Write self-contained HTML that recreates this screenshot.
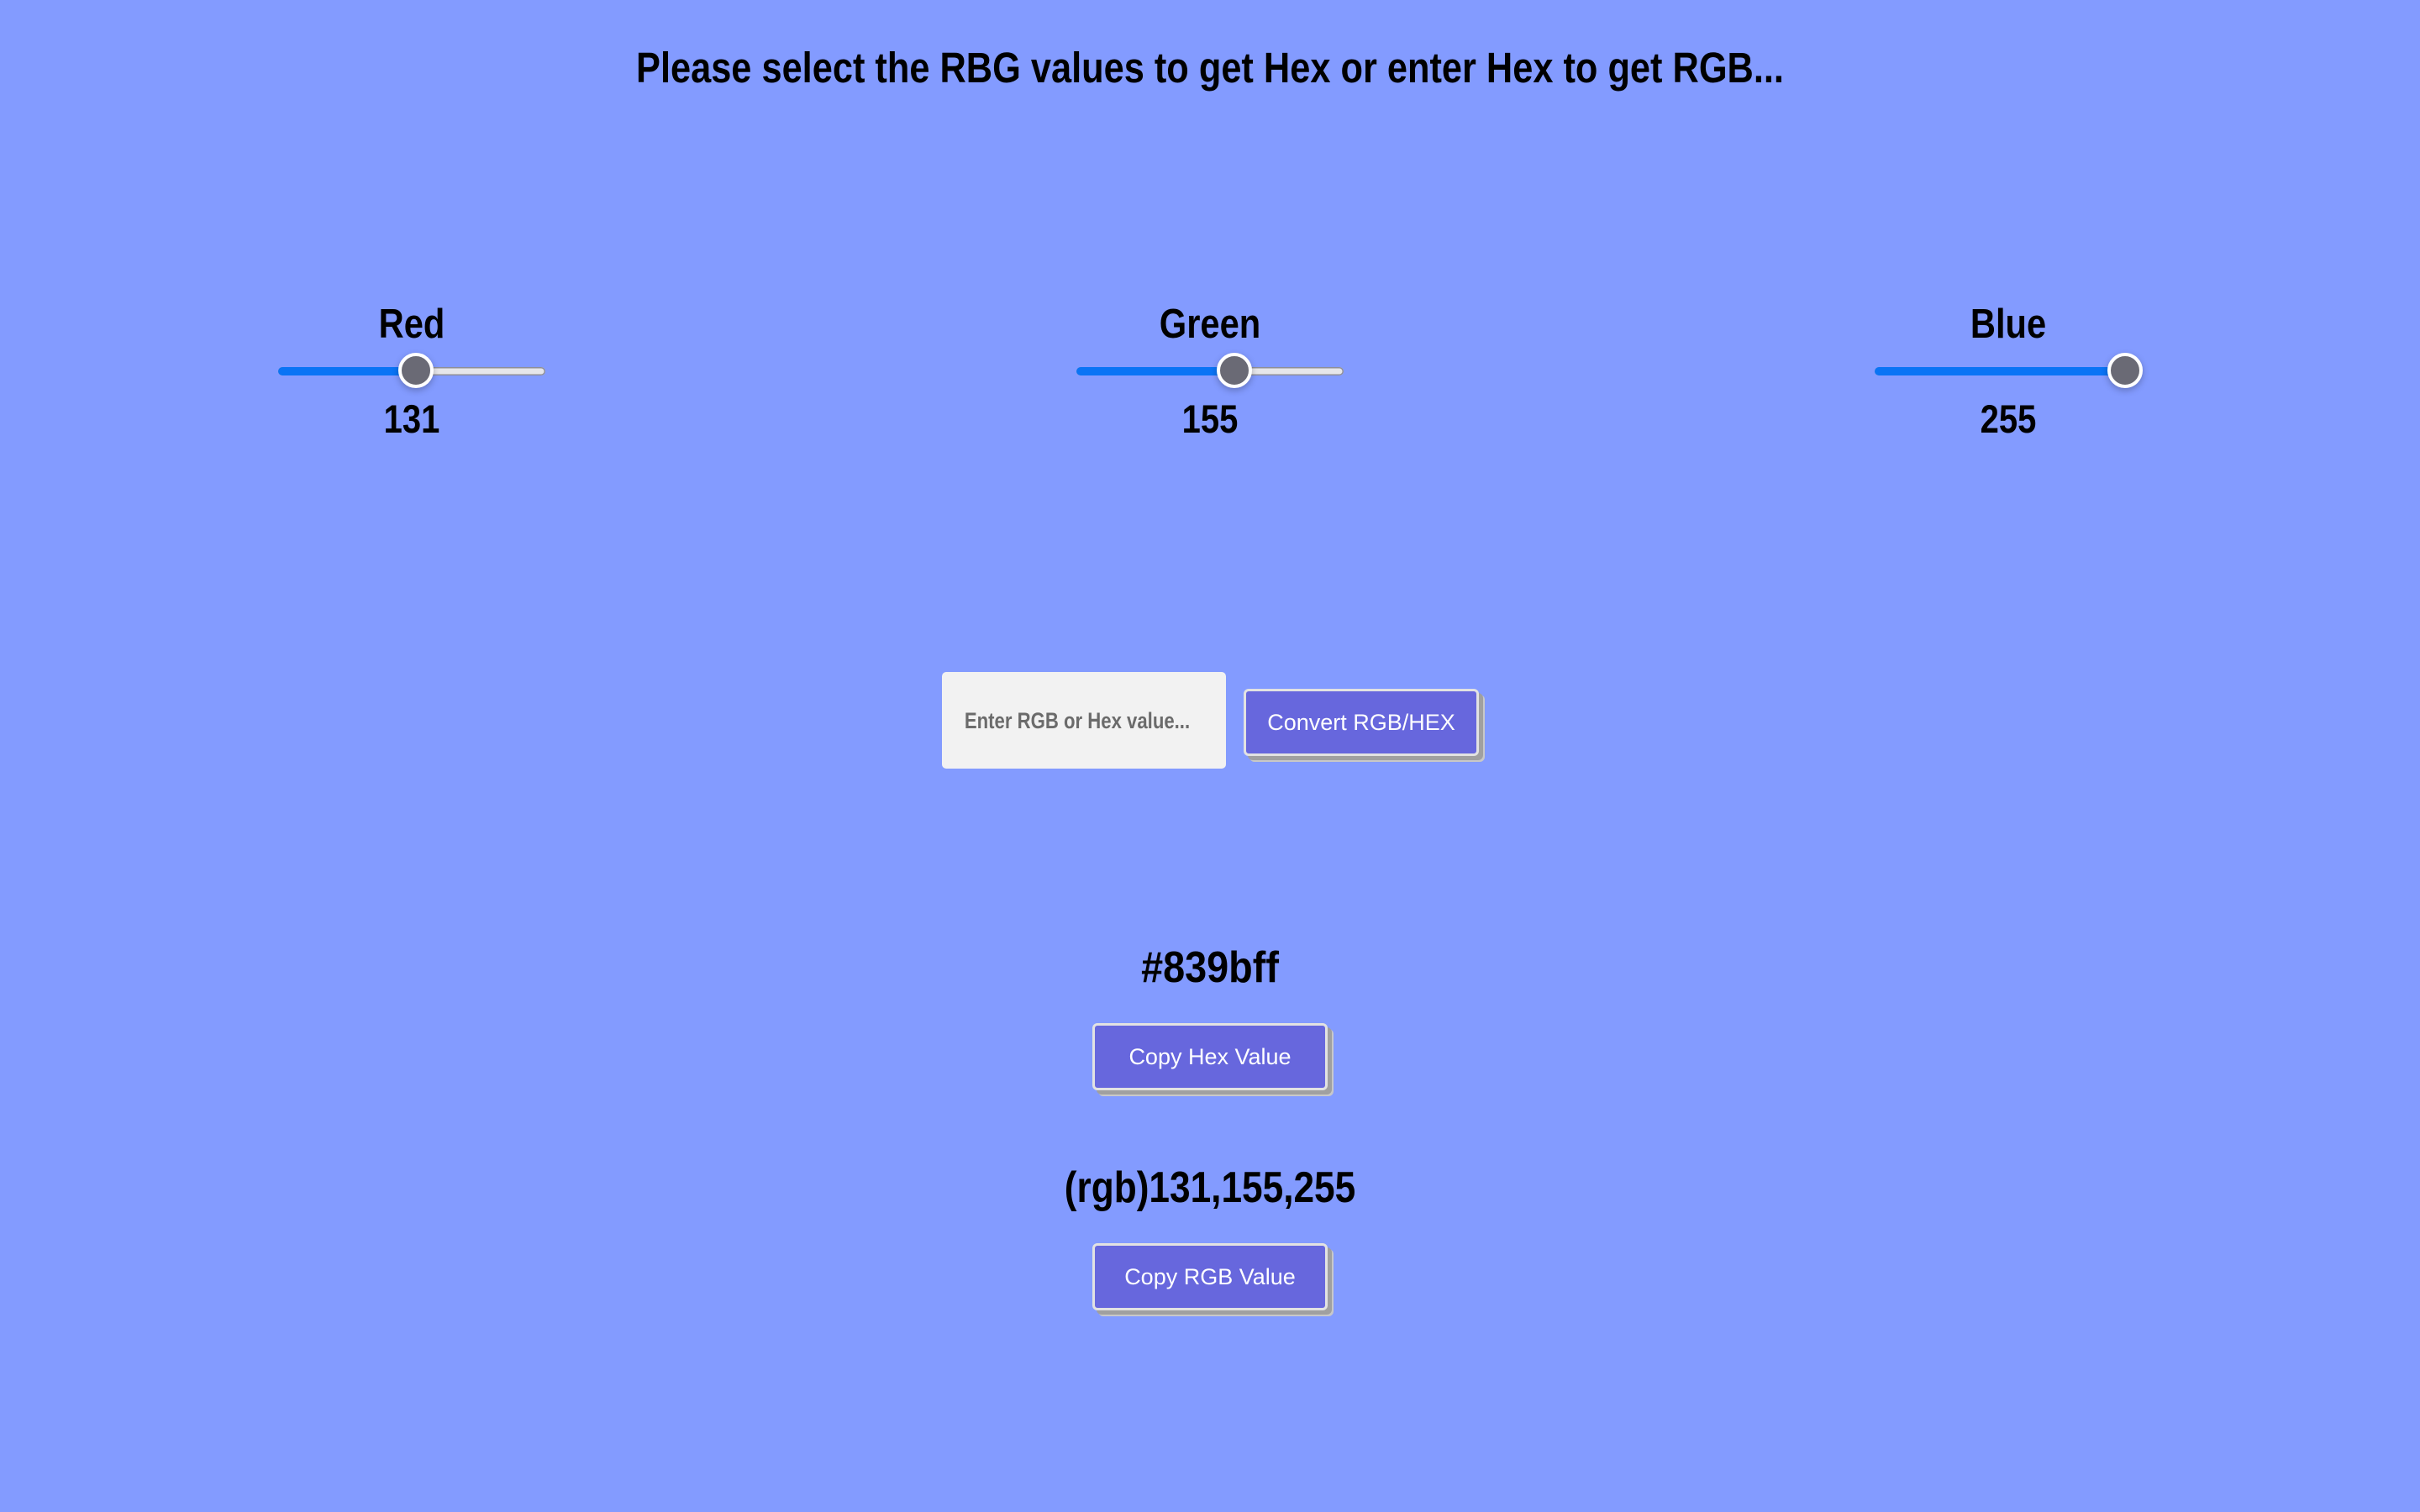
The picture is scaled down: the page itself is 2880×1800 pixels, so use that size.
<!DOCTYPE html>
<html><head><meta charset="utf-8"><style>
html,body{margin:0;padding:0;width:2880px;height:1800px;background:#839bff;overflow:hidden}
.t{position:absolute;font-family:"Liberation Sans",sans-serif;font-weight:bold;color:#000;white-space:nowrap;transform:translateX(-50%) scaleX(.85);line-height:1}
.track{position:absolute;height:10px;border-radius:5px;background:#e6e6ea;box-shadow:inset 0 0 0 1.5px #8e8e98}
.fill{position:absolute;left:0;top:0;height:10px;border-radius:5px;background:#0a74f5}
.thumb{position:absolute;width:34px;height:34px;border-radius:50%;background:#6a6a75;border:4px solid #fff;box-shadow:0 3px 8px rgba(0,0,0,.25)}
.btn{position:absolute;box-sizing:border-box;background:#6767dd;border:3px solid #e2e2e2;border-radius:6px;box-shadow:5px 5px 0 #a0a0a0,7px 7px 0 #c8c8c8;color:#fff;font-family:"Liberation Sans",sans-serif;font-size:27px;display:flex;align-items:center;justify-content:center}
.inp{position:absolute;left:1121px;top:800px;width:338px;height:115px;background:#f2f2f2;border-radius:5px}
</style></head><body>
<div class="t" style="left:1440px;top:55px;font-size:51px">Please select the RBG values to get Hex or enter Hex to get RGB...</div>

<div class="t" style="left:490px;top:362px;font-size:49px">Red</div>
<div class="track" style="left:331px;top:437px;width:318px"><div class="fill" style="width:165px"></div></div>
<div class="thumb" style="left:474px;top:420px"></div>
<div class="t" style="left:490px;top:475px;font-size:47px">131</div>

<div class="t" style="left:1440px;top:362px;font-size:49px">Green</div>
<div class="track" style="left:1281px;top:437px;width:318px"><div class="fill" style="width:190px"></div></div>
<div class="thumb" style="left:1448px;top:420px"></div>
<div class="t" style="left:1440px;top:475px;font-size:47px">155</div>

<div class="t" style="left:2390px;top:362px;font-size:49px">Blue</div>
<div class="track" style="left:2231px;top:437px;width:318px"><div class="fill" style="width:300px"></div></div>
<div class="thumb" style="left:2508px;top:420px"></div>
<div class="t" style="left:2390px;top:475px;font-size:47px">255</div>

<div class="inp"></div>
<div class="t" style="left:1282px;top:845px;font-size:27px;color:#6b6b6b;transform:translateX(-50%) scaleX(.82)">Enter RGB or Hex value...</div>
<div class="btn" style="left:1480px;top:820px;width:280px;height:80px">Convert RGB/HEX</div>

<div class="t" style="left:1440px;top:1126px;font-size:52px;transform:translateX(-50%) scaleX(.9)">#839bff</div>
<div class="btn" style="left:1300px;top:1218px;width:280px;height:80px">Copy Hex Value</div>

<div class="t" style="left:1440px;top:1388px;font-size:52px">(rgb)131,155,255</div>
<div class="btn" style="left:1300px;top:1480px;width:280px;height:80px">Copy RGB Value</div>
</body></html>
